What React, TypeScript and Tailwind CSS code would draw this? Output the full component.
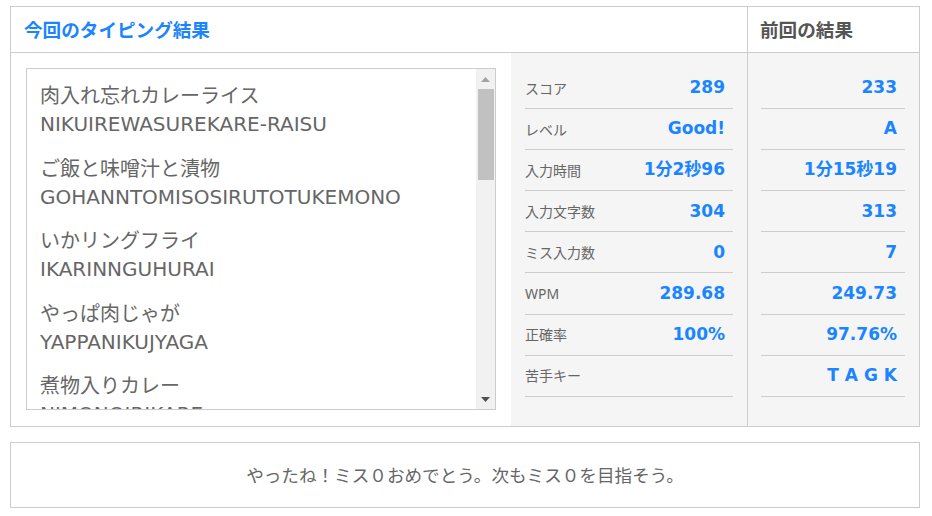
import React from "react";

const items: [string, string][] = [
  ["肉入れ忘れカレーライス", "NIKUIREWASUREKARE-RAISU"],
  ["ご飯と味噌汁と漬物", "GOHANNTOMISOSIRUTOTUKEMONO"],
  ["いかリングフライ", "IKARINNGUHURAI"],
  ["やっぱ肉じゃが", "YAPPANIKUJYAGA"],
  ["煮物入りカレー", "NIMONOIRIKARE-"],
];

const stats: [string, string, string][] = [
  ["スコア", "289", "233"],
  ["レベル", "Good!", "A"],
  ["入力時間", "1分2秒96", "1分15秒19"],
  ["入力文字数", "304", "313"],
  ["ミス入力数", "0", "7"],
  ["WPM", "289.68", "249.73"],
  ["正確率", "100%", "97.76%"],
  ["苦手キー", "", "T A G K"],
];

const font = { fontFamily: '"Noto Sans", "Noto Sans CJK JP", sans-serif' };
const wide = { fontFamily: '"DejaVu Sans", "Noto Sans CJK JP", sans-serif' };

export default function App() {
  return (
    <div className="w-[932px] h-[516px] bg-white pt-[6px] pl-[10px]" style={font}>
      <div className="w-[910px] border border-[#cccccc]">
        <div className="flex h-[46px] border-b border-[#cccccc]">
          <div className="flex-1 flex items-center pl-[13px] text-[18.6px] font-bold text-[#1a85ff]">
            今回のタイピング結果
          </div>
          <div className="w-[172px] border-l border-[#cccccc] flex items-center pl-[12px] text-[18.6px] font-bold text-[#555555]">
            前回の結果
          </div>
        </div>
        <div className="flex h-[373px]">
          <div className="w-[500px] p-[15px] bg-white">
            <div className="relative w-[470px] h-[342px] border border-[#cccccc] overflow-hidden">
              <div className="pl-[13px] pt-[12px] pr-[20px] text-[20px] leading-[29px] text-[#666666]">
                {items.map(([jp, ro]) => (
                  <div key={jp} className="mb-[14.5px]">
                    <div>{jp}</div>
                    <div className="whitespace-nowrap" style={wide}>{ro}</div>
                  </div>
                ))}
              </div>
              <div className="absolute right-0 top-0 bottom-0 w-[19px] bg-[#f1f1f1] flex flex-col items-center">
                <div className="h-[20px] flex items-center justify-center">
                  <svg width="9" height="5" viewBox="0 0 9 5"><path d="M0 5 L4.5 0 L9 5 Z" fill="#a3a3a3" /></svg>
                </div>
                <div className="w-[16px] h-[91px] bg-[#c1c1c1]" />
                <div className="flex-1" />
                <div className="h-[20px] flex items-center justify-center">
                  <svg width="9" height="5" viewBox="0 0 9 5"><path d="M0 0 L4.5 5 L9 0 Z" fill="#505050" /></svg>
                </div>
              </div>
            </div>
          </div>
          <div className="w-[236px] bg-[#f5f5f5] pt-[15px] pl-[14px] pr-[14px]">
            {stats.map(([label, v]) => (
              <div key={label} className="h-[41.1px] border-b border-[#cccccc] flex items-center justify-between pr-[8px]">
                <span className="text-[14px] text-[#666666]">{label}</span>
                <span className="text-[17px] font-bold text-[#1a85ff]" style={wide}>{v}</span>
              </div>
            ))}
          </div>
          <div className="w-[172px] border-l border-[#cccccc] bg-[#f5f5f5] pt-[15px] pl-[13px] pr-[14px]">
            {stats.map(([label, , p]) => (
              <div key={label} className="h-[41.1px] border-b border-[#cccccc] flex items-center justify-end pr-[8px]">
                <span className="text-[17px] font-bold text-[#1a85ff]" style={wide}>{p}</span>
              </div>
            ))}
          </div>
        </div>
      </div>
      <div className="mt-[15px] w-[910px] h-[66px] border border-[#cccccc] flex items-center justify-center text-[17.6px] text-[#666666]">
        やったね！ミス０おめでとう。次もミス０を目指そう。
      </div>
    </div>
  );
}
